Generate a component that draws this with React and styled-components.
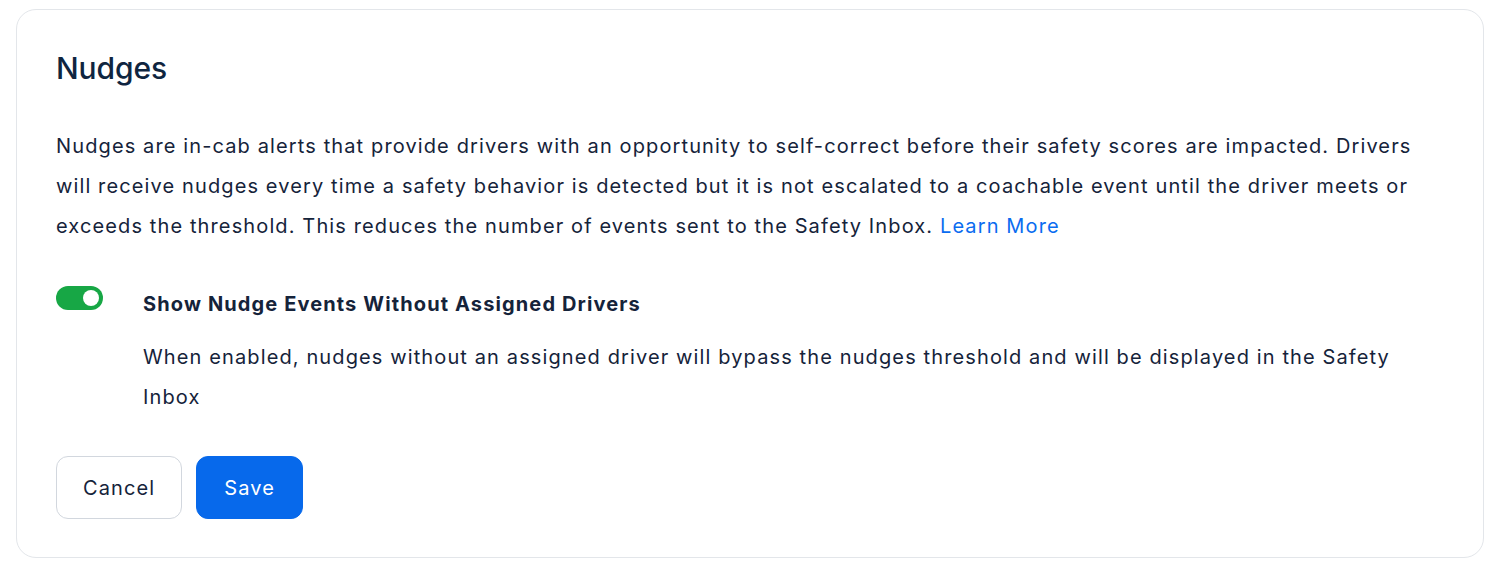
import * as React from 'react';
import styled, { createGlobalStyle } from 'styled-components';

const GlobalStyle = createGlobalStyle`
  html, body {
    margin: 0;
    background: #ffffff;
  }
  body {
    font-family: Inter, "Noto Sans", sans-serif;
    color: #15233a;
  }
`;

const Page = styled.div`
  padding: 9px 14px 9px 16px;
`;

const Card = styled.section`
  border: 1px solid #e3e6ea;
  border-radius: 20px;
  padding: 38px 39px 38px 39px;
  display: flex;
  flex-direction: column;
  gap: 38px;
`;

const Title = styled.h2`
  margin: 0;
  font-size: 30px;
  line-height: 40px;
  font-weight: 500;
  letter-spacing: -0.1px;
  color: #0f2540;
`;

const Text = styled.p`
  margin: 0;
  font-size: 20px;
  line-height: 40px;
  letter-spacing: 1.12px;
  color: #15233a;
`;

const Link = styled.a`
  color: #0a6cf0;
  text-decoration: none;
  cursor: pointer;
`;

const SettingRow = styled.div`
  display: flex;
  gap: 40px;
  align-items: flex-start;
`;

const Toggle = styled.button`
  flex: none;
  margin-top: 2px;
  width: 47px;
  height: 24px;
  border: none;
  border-radius: 12px;
  padding: 0;
  background: ${(p) => (p.$on ? '#17a745' : '#c7ccd3')};
  position: relative;
  cursor: pointer;

  &::after {
    content: '';
    position: absolute;
    top: 4px;
    left: ${(p) => (p.$on ? '27px' : '4px')};
    width: 16px;
    height: 16px;
    border-radius: 50%;
    background: #ffffff;
  }
`;

const SettingBody = styled.div`
  display: flex;
  flex-direction: column;
  gap: 13px;
`;

const Label = styled.div`
  font-size: 20px;
  line-height: 40px;
  font-weight: 700;
  letter-spacing: 1.12px;
  color: #15233a;
`;

const Actions = styled.div`
  display: flex;
  gap: 14px;
  margin-top: 1px;
`;

const Button = styled.button`
  height: 63px;
  padding: 0 ${(p) => (p.$primary ? '27px' : '26px')};
  border-radius: 12px;
  font-family: Inter, "Noto Sans", sans-serif;
  font-size: 20px;
  letter-spacing: 1.12px;
  cursor: pointer;
  border: 1px solid ${(p) => (p.$primary ? '#0769eb' : '#d2d7de')};
  background: ${(p) => (p.$primary ? '#0769eb' : '#ffffff')};
  color: ${(p) => (p.$primary ? '#ffffff' : '#15233a')};
`;

export default function App() {
  const [on, setOn] = React.useState(true);
  return (
    <Page>
      <GlobalStyle />
      <Card>
        <Title>Nudges</Title>
        <Text>
          Nudges are in-cab alerts that provide drivers with an opportunity to self-correct before their safety
          scores are impacted. Drivers will receive nudges every time a safety behavior is detected but it is not
          escalated to a coachable event until the driver meets or exceeds the threshold. This reduces the number
          of events sent to the Safety Inbox. <Link>Learn More</Link>
        </Text>
        <SettingRow>
          <Toggle $on={on} onClick={() => setOn(!on)} aria-label="toggle" />
          <SettingBody>
            <Label>Show Nudge Events Without Assigned Drivers</Label>
            <Text>
              When enabled, nudges without an assigned driver will bypass the nudges threshold and will be displayed
              in the Safety Inbox
            </Text>
          </SettingBody>
        </SettingRow>
        <Actions>
          <Button>Cancel</Button>
          <Button $primary>Save</Button>
        </Actions>
      </Card>
    </Page>
  );
}
